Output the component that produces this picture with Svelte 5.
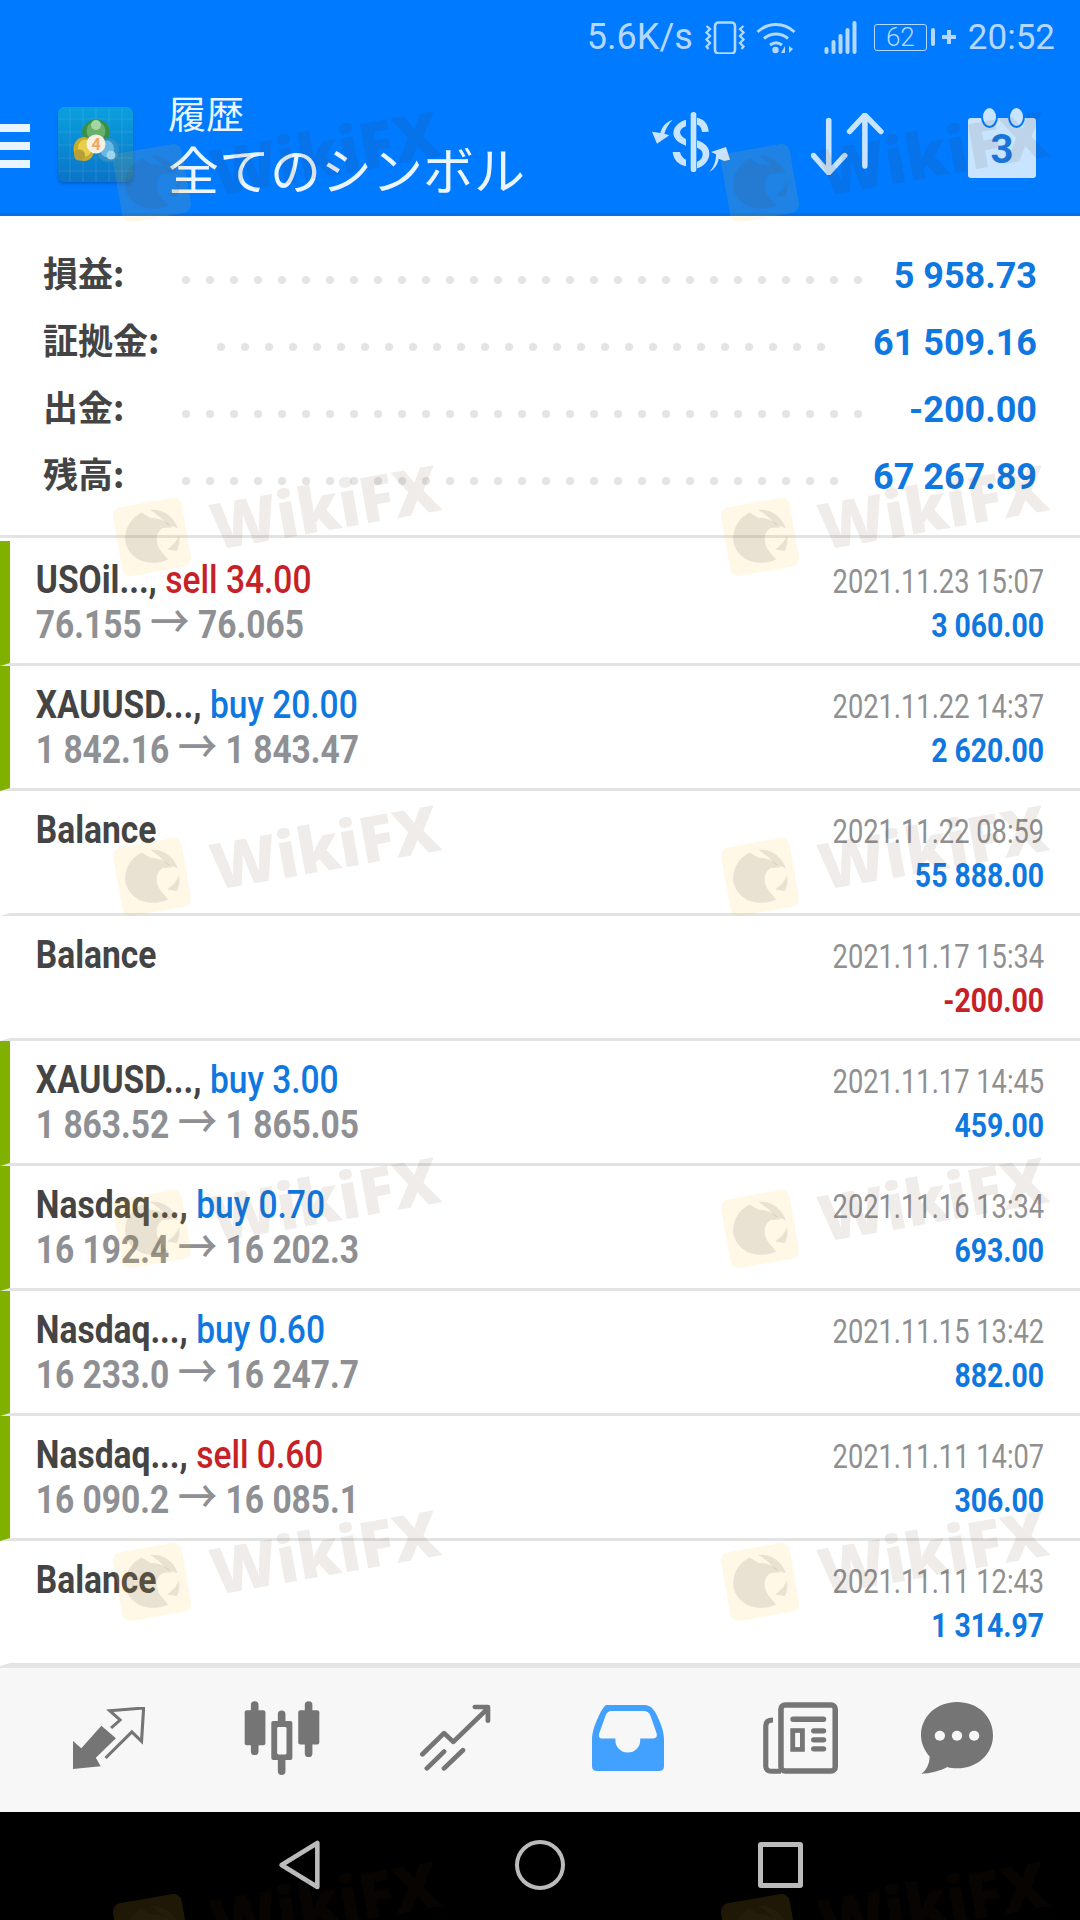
<script>
  const summary = [
    { label: '損益:', value: '5 958.73', dots: 29 },
    { label: '証拠金:', value: '61 509.16', dots: 26 },
    { label: '出金:', value: '-200.00', dots: 29 },
    { label: '残高:', value: '67 267.89', dots: 28 }
  ];

  const deals = [
    { symbol: 'USOil...,', side: 'sell', size: '34.00', from: '76.155', to: '76.065', date: '2021.11.23 15:07', amount: '3 060.00' },
    { symbol: 'XAUUSD...,', side: 'buy', size: '20.00', from: '1 842.16', to: '1 843.47', date: '2021.11.22 14:37', amount: '2 620.00' },
    { symbol: 'Balance', date: '2021.11.22 08:59', amount: '55 888.00' },
    { symbol: 'Balance', date: '2021.11.17 15:34', amount: '-200.00', negative: true },
    { symbol: 'XAUUSD...,', side: 'buy', size: '3.00', from: '1 863.52', to: '1 865.05', date: '2021.11.17 14:45', amount: '459.00' },
    { symbol: 'Nasdaq...,', side: 'buy', size: '0.70', from: '16 192.4', to: '16 202.3', date: '2021.11.16 13:34', amount: '693.00' },
    { symbol: 'Nasdaq...,', side: 'buy', size: '0.60', from: '16 233.0', to: '16 247.7', date: '2021.11.15 13:42', amount: '882.00' },
    { symbol: 'Nasdaq...,', side: 'sell', size: '0.60', from: '16 090.2', to: '16 085.1', date: '2021.11.11 14:07', amount: '306.00' },
    { symbol: 'Balance', date: '2021.11.11 12:43', amount: '1 314.97' }
  ];

  // watermark tiles: centre of each logo square
  const marks = [];
  for (const y of [183, 537, 877, 1229, 1582, 1933]) {
    for (const x of [152, 760]) marks.push({ left: x - 35, top: y - 35 });
  }
</script>

<div class="screen">
  <header class="header">
    <div class="status">
      <span class="speed">5.6K/s</span>
      <svg class="st-vibrate" viewBox="0 0 42 33" aria-hidden="true">
        <rect x="11" y="1.5" width="20" height="31" rx="3.5" fill="none" stroke="currentColor" stroke-width="2.6" />
        <path d="M2.5 5l3.5 3-3.5 3.5 3.5 3.5-3.5 3.5 3.5 3.5-3.5 3.5 2 2.5M39.5 5L36 8l3.500 3.500-3.500 3.500 3.500 3.500-3.500 3.500 3.500 3.500-2 2.500" fill="none" stroke="currentColor" stroke-width="2.3" />
      </svg>
      <svg class="st-wifi" viewBox="0 0 40 33" aria-hidden="true">
        <path d="M1.500 11C12 1 28 1 38.500 11M8 17.500c7-6 17-6 24 0M14 24c4-3 8-3 12 0" fill="none" stroke="currentColor" stroke-width="3" />
        <circle cx="19.500" cy="29" r="3.200" fill="currentColor" />
        <path d="M29 25v7h-4zM33 25v7l4-4z" fill="currentColor" />
      </svg>
      <svg class="st-signal" viewBox="0 0 33 33" aria-hidden="true">
        <g fill="currentColor">
          <rect x="0" y="26" width="4" height="7" rx="2" />
          <rect x="7" y="19" width="4" height="14" rx="2" />
          <rect x="14" y="13" width="4" height="20" rx="2" />
          <rect x="21" y="7" width="4" height="26" rx="2" />
          <rect x="28" y="0" width="4" height="33" rx="2" />
        </g>
      </svg>
      <span class="battery">62</span>
      <span class="battery-nub"></span>
      <svg class="st-plus" viewBox="0 0 16 16" aria-hidden="true">
        <path d="M8 1v14M1 8h14" stroke="currentColor" stroke-width="4" />
      </svg>
      <span class="clock">20:52</span>
    </div>

    <div class="toolbar">
      <div class="burger"><i></i><i></i><i></i></div>
      <div class="app-logo">
        <svg viewBox="0 0 75 75" aria-hidden="true">
          <g stroke="#ffffff" stroke-opacity=".1" stroke-width="1">
            <path d="M0 12h75M0 25h75M0 38h75M0 51h75M0 64h75M12 0v75M25 0v75M38 0v75M51 0v75M64 0v75" />
          </g>
          <ellipse cx="38" cy="25" rx="14" ry="12.500" fill="#3a8f48" />
          <ellipse cx="38" cy="24" rx="9.500" ry="9.500" fill="#69b06c" />
          <ellipse cx="38" cy="18" rx="5" ry="5" fill="#a6d6a4" />
          <ellipse cx="26" cy="42" rx="10.500" ry="12" fill="#c8ab2a" />
          <ellipse cx="27" cy="41" rx="7" ry="8.500" fill="#e6cf4a" />
          <circle cx="21.500" cy="48" r="5.500" fill="#b79f35" />
          <ellipse cx="50" cy="43" rx="11" ry="12" fill="#2f8fc9" />
          <ellipse cx="49" cy="42" rx="7" ry="8.500" fill="#67b8e2" />
          <circle cx="53" cy="48" r="4.500" fill="#9ed4ee" />
          <circle cx="38" cy="37" r="9.500" fill="#f5efe6" />
          <text x="38" y="43" text-anchor="middle" class="logo-four">4</text>
        </svg>
      </div>
      <div class="titles">
        <div class="title-small">履歴</div>
        <div class="title-big">全てのシンボル</div>
      </div>
      <div class="actions">
        <svg class="ic-dollar" viewBox="63 65 234 180" aria-hidden="true">
          <g fill="currentColor">
            <rect x="179" y="65" width="17" height="180" rx="8.500" />
            <path d="M198 82c22 4 34 20 35 42l-20 1c-1-12-6-20-15-22z" />
            <path d="M165 88c-24 8-37 22-38 40 1 17 14 30 38 38v-19c-10-5-17-12-18-21 1-9 8-14 18-18z" />
            <path d="M198 150c24 8 37 20 37 40-1 22-16 37-37 44v-20c11-4 17-12 17-23 0-9-6-15-17-19z" />
            <path d="M125 185h22c3 12 9 19 18 23v20c-24-5-37-20-40-43z" />
            <path d="M125 88c-20 7-32 20-37 40l-25-4 15 36 37-25-15-5c5-17 13-30 25-42z" />
            <path d="M235 245c16-10 25-22 28-40l17 7 17-4-12-38-45 15 15 7c0 22-7 39-20 53z" />
          </g>
        </svg>
        <svg class="ic-arrows" viewBox="785 338 210 187" preserveAspectRatio="none" aria-hidden="true">
          <path d="M836 360v158M792 466l44 52 46-52M940 498V346M896 394l44-50 46 50" fill="none" stroke="currentColor" stroke-width="16" stroke-linecap="round" stroke-linejoin="round" />
        </svg>
        <div class="calendar">
          <i class="ring ring-a"></i><i class="ring ring-b"></i>
          <span>3</span>
        </div>
      </div>
    </div>
  </header>

  <section class="summary">
    {#each summary as row}
      <div class="sum-row">
        <span class="sum-label">{row.label}</span>
        <span class="sum-dots">
          {#each Array(row.dots) as _}<i></i>{/each}
        </span>
        <span class="sum-value">{row.value}</span>
      </div>
    {/each}
  </section>

  <section class="deals">
    {#each deals as deal}
      <div class="deal" class:trade={deal.side}>
        <div class="deal-left">
          <div class="deal-title">
            <span class="symbol">{deal.symbol}</span>
            {#if deal.side}
              <span class={deal.side}>{deal.side} {deal.size}</span>
            {/if}
          </div>
          {#if deal.side}
            <div class="deal-prices">{deal.from} <span class="arrow">→</span> {deal.to}</div>
          {/if}
        </div>
        <div class="deal-right">
          <div class="deal-date">{deal.date}</div>
          <div class="deal-amount" class:negative={deal.negative}>{deal.amount}</div>
        </div>
      </div>
    {/each}
  </section>

  <nav class="tabs">
    <div class="tab">
      <svg class="t1" viewBox="216 142 208 186" preserveAspectRatio="none" aria-hidden="true">
        <path d="M216 328v-84l24 22 58-68 42 38-58 58 14 26z" fill="#757575" />
        <path d="M310 295l76-78 28 28 6-100-98 8 30 28-26 24" fill="none" stroke="#757575" stroke-width="9" />
      </svg>
    </div>
    <div class="tab">
      <svg class="t2" viewBox="708 122 220 223" preserveAspectRatio="none" aria-hidden="true">
        <path d="M739 134v140M817 162v172M895 134v146" stroke="#757575" stroke-width="22" stroke-linecap="round" />
        <rect x="710" y="150" width="60" height="105" rx="6" fill="#757575" />
        <rect x="787" y="182" width="61" height="118" rx="6" fill="#757575" />
        <rect x="804" y="200" width="27" height="83" rx="4" fill="#f7f7f7" />
        <rect x="865" y="150" width="61" height="103" rx="6" fill="#757575" />
      </svg>
    </div>
    <div class="tab">
      <svg class="t3" viewBox="1212 130 210 200" preserveAspectRatio="none" aria-hidden="true">
        <path d="M1222 280l63-63 27 26 94-93M1375 139h38v41M1235 322l50-50M1285 322l55-54" fill="none" stroke="#757575" stroke-width="14" stroke-linecap="round" stroke-linejoin="round" />
      </svg>
    </div>
    <div class="tab">
      <svg class="t4" viewBox="148 132 209 197" preserveAspectRatio="none" aria-hidden="true">
        <path d="M190 132h110c20 0 30 16 38 34 12 26 19 48 19 70v79c0 9-5 14-14 14H162c-9 0-14-5-14-14v-79c0-22 7-44 19-70 8-18 18-34 23-34z" fill="#42a0ff" />
        <path d="M205 150h92c11 0 18 5 21 15l17 50c4 11-1 17-10 17h-37v6a36 36 0 0 1-72 0v-6h-38c-9 0-12-7-9-16l18-51c3-10 9-15 18-15z" fill="#f7f7f7" />
      </svg>
    </div>
    <div class="tab">
      <svg class="t5" viewBox="648 122 217 217" preserveAspectRatio="none" aria-hidden="true">
        <g fill="none" stroke="#757575">
          <rect x="700" y="131" width="157" height="199" rx="12" stroke-width="16" />
          <path d="M677 176c-14 0-21 6-21 18v122c0 9 6 15 15 15h29" stroke-width="15" />
          <path d="M735 174h88M795 209h28M795 236h28M795 263h28" stroke-width="16" stroke-linecap="round" />
          <rect x="734" y="208" width="28" height="57" stroke-width="14" />
        </g>
      </svg>
    </div>
    <div class="tab">
      <svg class="t6" viewBox="1108 122 210 217" preserveAspectRatio="none" aria-hidden="true">
        <path d="M1213 122c60 0 105 42 105 100s-47 100-105 100c-10 0-20-1-28-4-22 12-50 20-76 20 16-12 24-30 24-52-15-18-25-40-25-64 0-58 47-100 105-100z" fill="#757575" />
        <g fill="#f7f7f7">
          <circle cx="1163" cy="224" r="15" /><circle cx="1213" cy="224" r="15" /><circle cx="1263" cy="224" r="15" />
        </g>
      </svg>
    </div>
  </nav>

  <footer class="softkeys">
    <svg viewBox="0 0 48 56" class="k-back" aria-hidden="true">
      <path d="M5 28L44 4v48z" fill="none" stroke="#bbb" stroke-width="5" stroke-linejoin="round" />
    </svg>
    <span class="k-home"></span>
    <span class="k-recent"></span>
  </footer>

  <div class="watermarks" aria-hidden="true">
    {#each marks as m}
      <div class="mark" style="left: {m.left}px; top: {m.top}px">
        <svg class="mark-logo" viewBox="0 0 70 70">
          <rect width="70" height="70" rx="9" fill="#ffc832" fill-opacity=".12" />
          <g fill="#4a4038" fill-opacity=".12">
            <path d="M8 36C8 24 16 13 29 9l8 7c8 1 15 6 20 13l-10-1c-5 2-8 7-8 13 0 8 5 13 8 19C28 65 9 54 8 36z" />
            <path d="M38 8c12 1 22 10 24 23l-10-6c-4-7-9-13-14-17z" />
            <path d="M62 38c0 6-2 11-5 15l-9-3c6-3 11-7 14-12z" />
          </g>
        </svg>
        <span class="mark-text">WikiFX</span>
      </div>
    {/each}
  </div>
</div>

<style>
  :global(body) {
    margin: 0;
    background: #fff;
  }

  .screen {
    position: relative;
    width: 1080px;
    height: 1920px;
    overflow: hidden;
    display: flex;
    flex-direction: column;
    background: #fff;
    font-family: Roboto, "Noto Sans CJK JP", sans-serif;
  }

  /* header */
  .header {
    height: 213px;
    background: #007aff;
    border-bottom: 3px solid #0a6fdf;
    flex-shrink: 0;
  }

  .status {
    height: 72px;
    box-sizing: border-box;
    padding: 2px 25px 0 0;
    display: flex;
    align-items: center;
    justify-content: flex-end;
    color: #b4d8ff;
    font-size: 35px;
  }

  .speed { font-size: 36px; margin-right: 11px; }
  .st-vibrate { width: 42px; height: 33px; margin-right: 10px; }
  .st-wifi { width: 40px; height: 33px; margin-right: 28px; }
  .st-signal { width: 34px; height: 33px; margin-right: 16px; }

  .battery {
    width: 53px;
    height: 27px;
    box-sizing: border-box;
    border: 1.5px solid #b4d8ff;
    border-radius: 3px;
    font-size: 26px;
    font-weight: 300;
    line-height: 24px;
    text-align: center;
  }

  .battery-nub {
    width: 4px;
    height: 18px;
    margin: 0 6px 0 4px;
    border-radius: 2px;
    background: #b4d8ff;
  }

  .st-plus { width: 16px; height: 16px; margin-right: 11px; }

  .toolbar {
    height: 141px;
    display: flex;
    align-items: flex-start;
    position: relative;
  }

  .burger {
    width: 30px;
    margin-top: 52px;
    display: flex;
    flex-direction: column;
    gap: 10px;
  }

  .burger i {
    display: block;
    height: 8px;
    background: #e8f4ff;
  }

  .app-logo {
    width: 75px;
    height: 75px;
    margin: 35px 0 0 28px;
    border-radius: 6px;
    overflow: hidden;
    background: linear-gradient(#0aa0de, #0a74c8);
    box-shadow: 0 2px 3px rgba(0, 50, 120, .35);
  }

  .app-logo svg {
    display: block;
    width: 100%;
    height: 100%;
  }

  .logo-four {
    font: 700 16px Roboto, sans-serif;
    fill: #f2a65a;
  }

  .titles {
    margin: 17px 0 0 35px;
    color: #eaf5ff;
    font-family: "Noto Sans CJK JP", sans-serif;
  }

  .title-small {
    font-size: 38px;
    line-height: 45px;
  }

  .title-big {
    font-size: 51px;
    line-height: 68px;
  }

  .actions {
    position: absolute;
    top: 0;
    left: 0;
    right: 0;
    bottom: 0;
    pointer-events: none;
    display: flex;
    align-items: flex-start;
    justify-content: flex-end;
    padding-right: 44px;
    color: #c9e4ff;
  }

  .ic-dollar { width: 78px; height: 60px; margin: 40px 81px 0 0; }
  .ic-arrows { width: 73px; height: 62px; margin: 41px 84px 0 0; }

  .calendar {
    position: relative;
    width: 68px;
    height: 60px;
    margin-top: 46px;
    border-radius: 3px;
    background: #c9e4ff;
    color: #1b74d9;
    font-size: 40px;
    font-weight: 700;
    line-height: 64px;
    text-align: center;
  }

  .ring {
    position: absolute;
    top: -12px;
    width: 13px;
    height: 18px;
    border-radius: 50%;
    background: #c9e4ff;
    border: 2px solid #007aff;
  }

  .ring-a { left: 13px; }
  .ring-b { left: 40px; }

  /* summary */
  .summary {
    height: 319px;
    margin-bottom: 3px;
    border-bottom: 3px solid #e3e3e3;
    display: flex;
    flex-direction: column;
    flex-shrink: 0;
  }

  .sum-row {
    height: 67px;
    display: flex;
    align-items: center;
    padding: 0 43px;
  }

  .sum-row:first-child { margin-top: 24px; }

  .sum-label {
    font-family: "Noto Sans CJK JP", sans-serif;
    font-size: 35px;
    font-weight: 700;
    color: #444;
    margin: 0 58px 4px 0;
  }

  .sum-dots {
    flex: 1;
    height: 8px;
    margin: 12px 0 0 0;
    display: flex;
    gap: 16px;
    overflow: hidden;
  }

  .sum-dots i {
    width: 8px;
    height: 8px;
    flex-shrink: 0;
    border-radius: 50%;
    background: #e4e4e4;
  }

  .sum-value {
    font-size: 36px;
    font-weight: 700;
    color: #0f78e0;
    margin-top: 4px;
  }

  /* deal rows */
  .deals {
    flex: 1;
    min-height: 0;
  }

  .deal {
    height: 122px;
    border-bottom: 3px solid #e3e3e3;
    border-left: 10px solid transparent;
    display: flex;
    justify-content: space-between;
  }

  .deal.trade { border-left-color: #80b000; }

  .deal-left {
    padding: 17px 0 0 30px;
    font-size: 39px;
    font-weight: 700;
    line-height: 44px;
    transform: scaleX(.86);
    transform-origin: 0 0;
    white-space: nowrap;
  }

  .deal-left .symbol { color: #444; }
  .sell { color: #c62127; font-weight: 500; }
  .buy { color: #0f78e0; font-weight: 500; }

  .deal-prices { color: #8e9094; }
  .arrow { font-size: 46px; font-weight: 500; line-height: 40px; }

  .deal-right {
    padding: 19px 36px 0 0;
    text-align: right;
    line-height: 44px;
    white-space: nowrap;
  }

  .deal-date {
    font-size: 33px;
    color: #909090;
    transform: scaleX(.826);
    transform-origin: 100% 50%;
  }

  .deal-amount {
    font-size: 33px;
    font-weight: 700;
    color: #0f78e0;
    transform: scaleX(.86);
    transform-origin: 100% 50%;
  }

  .deal-amount.negative { color: #c62127; }

  /* bottom tabs */
  .tabs {
    height: 144px;
    border-top: 2px solid #e6e6e6;
    background: #f7f7f7;
    padding-left: 22px;
    display: grid;
    grid-template-columns: repeat(5, 173px) 140px;
    flex-shrink: 0;
  }

  .tab {
    display: flex;
    align-items: center;
    justify-content: center;
    padding-bottom: 5px;
  }

  .t1 { width: 72px; height: 62px; }
  .t2 { width: 76px; height: 74px; }
  .t3 { width: 72px; height: 67px; }
  .t4 { width: 72px; height: 66px; }
  .t5 { width: 75px; height: 72px; }
  .t6 { width: 72px; height: 72px; }

  /* android keys */
  .softkeys {
    height: 108px;
    background: #000;
    display: flex;
    align-items: center;
    flex-shrink: 0;
  }

  .k-back { width: 44px; height: 52px; margin: -2px 0 0 277px; }

  .k-home {
    width: 50px;
    height: 50px;
    box-sizing: border-box;
    border: 4px solid #bbb;
    border-radius: 50%;
    margin: -2px 0 0 194px;
  }

  .k-recent {
    width: 45px;
    height: 46px;
    box-sizing: border-box;
    border: 5px solid #bbb;
    border-radius: 3px;
    margin: -2px 0 0 193px;
  }

  /* watermark sits on top of everything */
  .watermarks {
    position: absolute;
    inset: 0;
    pointer-events: none;
  }

  .mark {
    position: absolute;
    height: 70px;
    display: flex;
    align-items: center;
    gap: 25px;
    transform: rotate(-10deg);
    transform-origin: 35px 35px;
    white-space: nowrap;
  }

  .mark-logo {
    width: 70px;
    height: 70px;
    flex-shrink: 0;
  }

  .mark-text {
    font-family: "Open Sans", sans-serif;
    font-size: 64px;
    font-weight: 800;
    line-height: 70px;
    color: rgba(80, 40, 26, .09);
  }
</style>
